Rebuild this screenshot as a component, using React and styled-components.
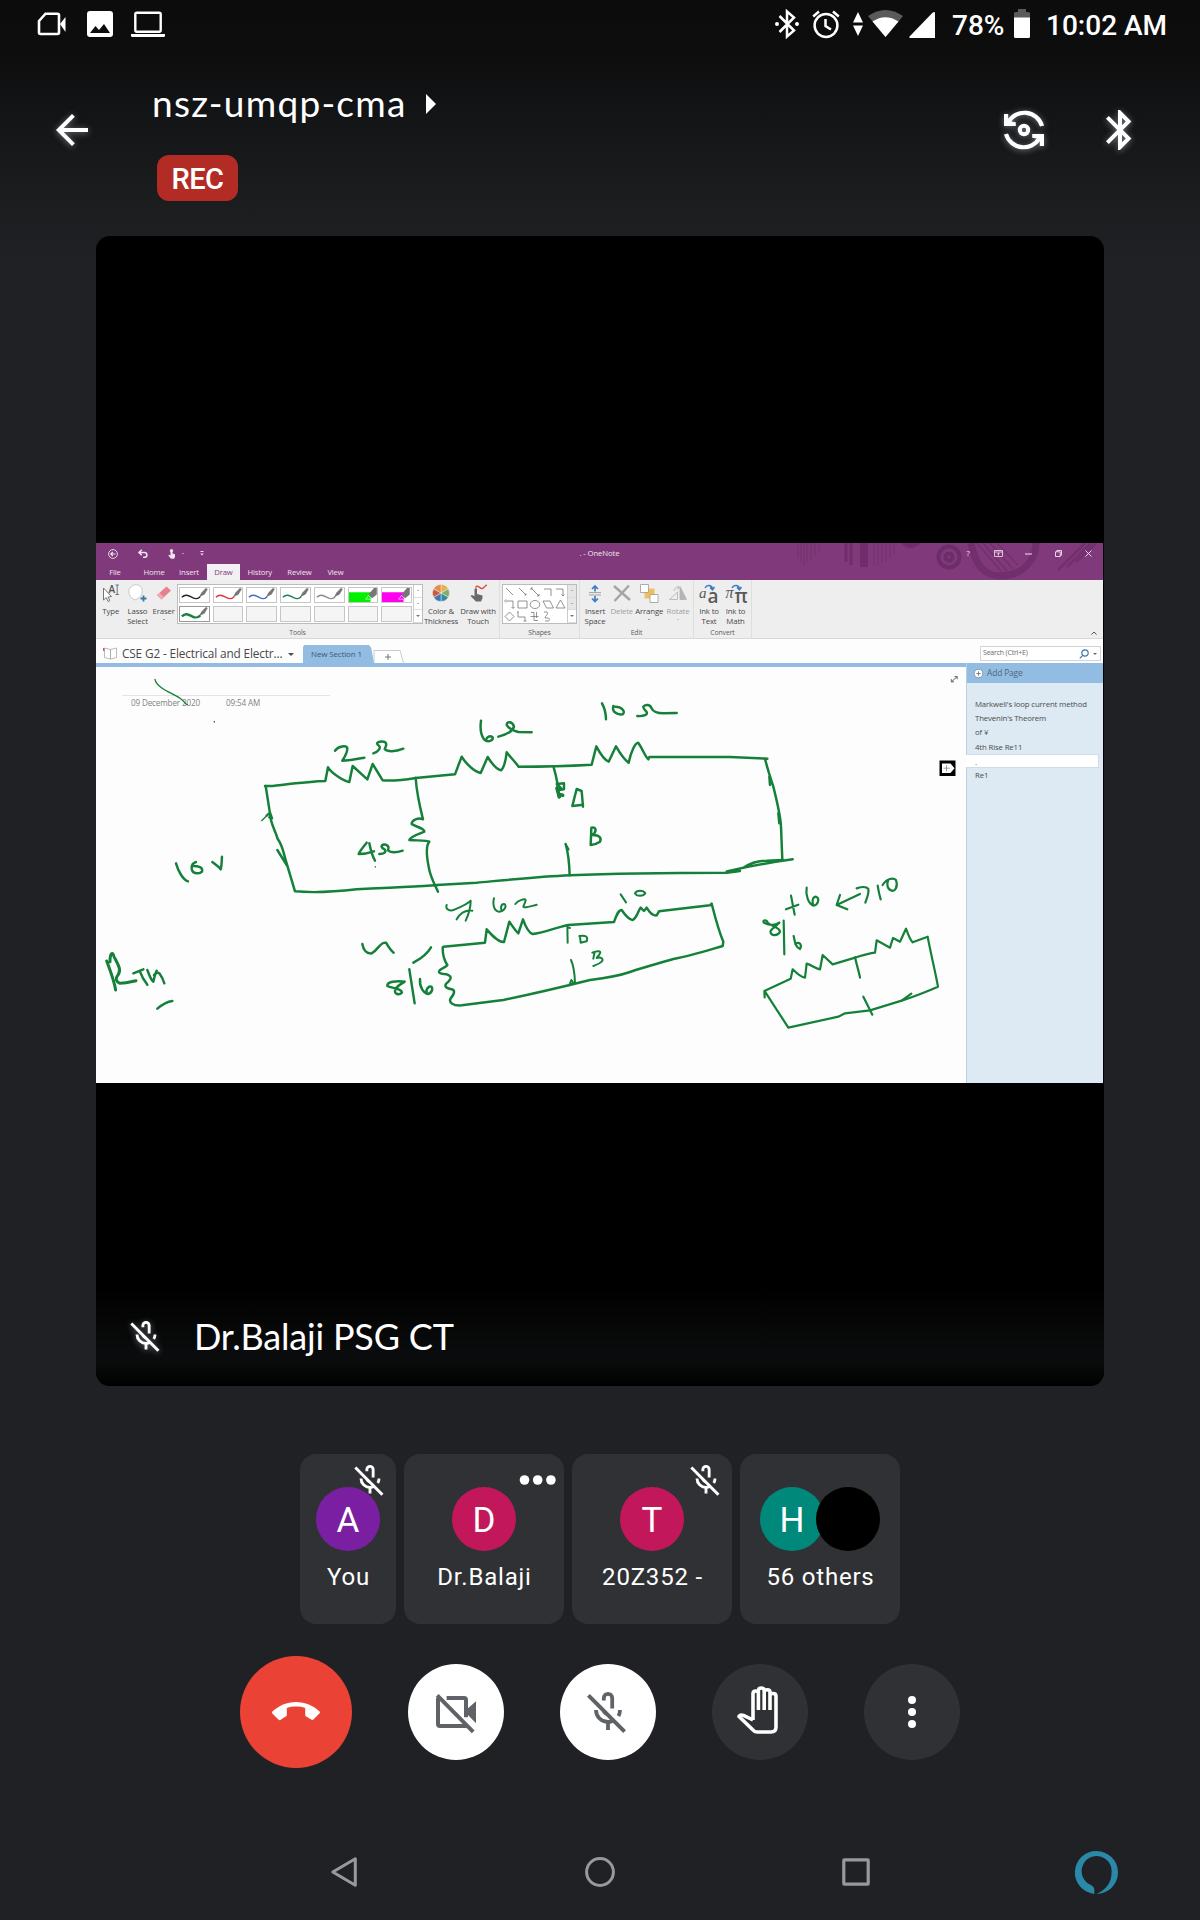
import React from "react";
import styled, { createGlobalStyle } from "styled-components";

const GlobalStyle = createGlobalStyle`
  *, *::before, *::after { box-sizing: border-box; }
  body { margin: 0; background: #202124; }
`;

const ui = `"Roboto", "Liberation Sans", sans-serif`;
const office = `"Open Sans", "Noto Sans", sans-serif`;

const Screen = styled.main`
  width: 1200px;
  height: 1920px;
  display: flex;
  flex-direction: column;
  overflow: hidden;
  color: #fff;
  font-family: ${ui};
  background: linear-gradient(#0c0c0c 0, #0d0d0d 48px, #141517 120px, #1b1c1e 190px, #202124 265px);
`;

const Glyph = styled.svg`
  display: block;
  flex: none;
  width: ${(p) => p.$w}px;
  height: ${(p) => p.$h || p.$w}px;
  margin-left: ${(p) => p.$ml || 0}px;
  margin-top: ${(p) => p.$mt || 0}px;
  overflow: visible;
  ${(p) => p.$glow && "filter: drop-shadow(0 1px 3px rgba(200, 215, 225, 0.5));"}
`;

/* ---------- system status bar ---------- */

const StatusBar = styled.div`
  height: 50px;
  flex: none;
  display: flex;
  justify-content: space-between;
  align-items: flex-start;
  padding: 9px 33px 0 37px;
`;
const StatusGroup = styled.div`
  display: flex;
  align-items: flex-start;
`;
const StatusText = styled.span`
  margin-left: ${(p) => p.$ml}px;
  width: ${(p) => p.$w}px;
  font-size: 28px;
  font-weight: 500;
  line-height: 34px;
  white-space: nowrap;
  letter-spacing: ${(p) => p.$ls || 0}px;
`;

/* ---------- meeting header ---------- */

const Header = styled.header`
  height: 186px;
  flex: none;
  display: flex;
  padding: 0 56px 0 48px;
`;
const BackButton = styled.div`
  padding-top: 56px;
  width: 104px;
`;
const TitleBlock = styled.div`
  flex: 1;
  padding-top: 30px;
`;
const TitleLine = styled.div`
  display: flex;
  align-items: center;
  height: 48px;
`;
const MeetingCode = styled.h1`
  margin: 0;
  width: 274px;
  font: 400 37px/46px "Lato", ${ui};
  height: 48px;
  letter-spacing: 1.25px;
  white-space: nowrap;
`;
const RecBadge = styled.div`
  margin: 27px 0 0 5px;
  width: 81px;
  height: 46px;
  padding-top: 1px;
  border-radius: 12px;
  background: #b32b25;
  display: flex;
  align-items: center;
  justify-content: center;
  font-size: 29px;
  font-weight: 500;
  letter-spacing: -0.5px;
`;
const HeaderActions = styled.div`
  display: flex;
  gap: 48px;
  padding-top: 56px;
`;

/* ---------- presentation stage ---------- */

const Stage = styled.section`
  position: relative;
  width: 1008px;
  height: 1150px;
  flex: none;
  margin: 0 96px;
  padding-top: 307px;
  border-radius: 14px;
  background: #000;
  overflow: hidden;
`;
const SpeakerBar = styled.div`
  position: absolute;
  left: 0;
  right: 0;
  bottom: 0;
  height: 100px;
  padding: 0 32px 32px;
  display: flex;
  align-items: flex-end;
  background: linear-gradient(#000, #0b0c0d 72%, #000);
`;
const SpeakerName = styled.span`
  margin-left: 30px;
  font: 400 36px/36px "Lato", ${ui};
  white-space: nowrap;
  letter-spacing: -0.2px;
`;

/* ---------- shared OneNote window ---------- */

const Window = styled.div`
  width: 1007px;
  height: 540px;
  display: flex;
  flex-direction: column;
  background: #fdfdfd;
  color: #4a4a4a;
  font: 7.8px/10.4px ${office};
  letter-spacing: -0.14px;
`;
const Caption = styled.div`
  position: relative;
  height: 37px;
  background: #80397a;
  color: #f0e4ee;
`;
const Pattern = styled.svg`
  position: absolute;
  right: 0;
  top: 0;
  width: 310px;
  height: 37px;
`;
const CaptionRow = styled.div`
  position: relative;
  height: 21px;
  display: grid;
  grid-template-columns: 1fr auto 1fr;
  align-items: center;
`;
const QuickAccess = styled.div`
  display: flex;
  align-items: center;
  padding-left: 12px;
`;
const WindowButtons = styled.div`
  display: flex;
  justify-content: flex-end;
`;
const WindowButton = styled.span`
  width: 30px;
  height: 20px;
  display: flex;
  align-items: center;
  justify-content: center;
`;
const Tabs = styled.div`
  position: relative;
  display: flex;
  padding-left: 1px;
  height: 16px;
`;
const Tab = styled.span`
  width: ${(p) => p.$w}px;
  margin-left: ${(p) => p.$ml || 0}px;
  text-align: center;
  line-height: 16px;
  font-size: 7.7px;
  background: ${(p) => (p.$active ? "#f3f0f3" : "transparent")};
  color: ${(p) => (p.$active ? "#80397a" : "#f0e4ee")};
`;

const Ribbon = styled.div`
  height: 59px;
  display: flex;
  background: #efeeef;
  border-bottom: 1px solid #d8d8d8;
`;
const Group = styled.div`
  width: ${(p) => p.$w}px;
  display: flex;
  flex-direction: column;
  border-right: 1px solid #dfdedf;
`;
const GroupItems = styled.div`
  height: 48px;
  display: flex;
  padding-left: ${(p) => p.$pl || 0}px;
`;
const GroupLabel = styled.div`
  text-align: center;
  font-size: 6.9px;
  line-height: 11px;
  color: #5c5c5c;
`;
const Tool = styled.div`
  width: ${(p) => p.$w}px;
  display: flex;
  flex-direction: column;
  align-items: center;
  padding-top: 4px;
  text-align: center;
  white-space: pre;
  color: ${(p) => (p.$off ? "#a0a0a0" : "#484848")};
`;
const ToolIcon = styled.div`
  height: 22px;
`;
const Caret = styled.i`
  width: 0;
  height: 0;
  border: ${(p) => p.$s || 1.5}px solid transparent;
  border-top-color: currentColor;
  border-bottom: 0;
  margin: ${(p) => p.$m || "3px 0 0"};
`;
const Gallery = styled.div`
  width: ${(p) => p.$w}px;
  height: 40px;
  margin-top: 4px;
  display: flex;
  background: #fff;
  border: 1px solid #bcbcbc;
`;
const PenGrid = styled.div`
  flex: 1;
  display: grid;
  grid-template-columns: repeat(7, 1fr);
  gap: 3px;
  padding: 2px 1px 1px 1px;
`;
const PenCell = styled.div`
  border: ${(p) => (p.$selected ? "1.5px solid #999" : "1px solid #c6c6c6")};
  background: ${(p) => (p.$empty ? "#f5f5f5" : "#fff")};
  svg { display: block; width: 100%; height: 100%; }
`;
const Scroller = styled.div`
  width: 9px;
  display: flex;
  flex-direction: column;
  border-left: 1px solid #ccc;
  color: #777;
`;
const ScrollStep = styled.span`
  flex: 1;
  display: flex;
  align-items: center;
  justify-content: center;
  border-bottom: 1px solid #ddd;
  background: ${(p) => (p.$dim ? "#e6e6e6" : "#fff")};
`;
const RibbonEnd = styled.div`
  flex: 1;
  display: flex;
  justify-content: flex-end;
  align-items: flex-end;
  padding: 0 6px 3px 0;
`;

const SectionRow = styled.div`
  height: 28px;
  display: flex;
  align-items: flex-end;
  background: #fefdfe;
  border-bottom: 4px solid #92bce2;
`;
const Notebook = styled.div`
  width: 207px;
  height: 24px;
  display: flex;
  align-items: center;
  padding: 4px 0 0 7px;
`;
const NotebookName = styled.span`
  margin-left: 4px;
  width: 163px;
  white-space: nowrap;
  font-size: 11.8px;
  line-height: 16px;
  color: #484848;
`;
const SectionTab = styled.div`
  width: 71px;
  height: 18px;
  padding-left: 8px;
  font-size: 8px;
  line-height: 18px;
  color: #3d5873;
  background: #92bce2;
  clip-path: polygon(0 8%, 2% 0, 93% 0, 96% 15%, 100% 100%, 0 100%);
  white-space: nowrap;
`;
const SearchBox = styled.div`
  margin-left: auto;
  margin-right: 2px;
  margin-bottom: 2px;
  width: 121px;
  height: 15px;
  display: flex;
  align-items: center;
  padding: 0 2px;
  border: 1px solid #d4d4d4;
  background: #fff;
  font-size: 7px;
  letter-spacing: -0.2px;
  color: #6a6a6a;
`;
const SearchText = styled.span`
  flex: 1;
`;

const Workspace = styled.div`
  flex: 1;
  display: flex;
`;
const Paper = styled.div`
  position: relative;
  width: 870px;
  padding: 28px 0 0 26px;
  background: #fdfdfd;
`;
const DateLine = styled.div`
  width: 208px;
  padding: 1px 0 0 9px;
  border-top: 1px solid #e4e4e4;
  display: flex;
  font-size: 8.1px;
  line-height: 11px;
  color: #828282;
  white-space: nowrap;
`;
const DateText = styled.span`
  width: 95px;
`;
const Ink = styled.svg`
  position: absolute;
  left: 0;
  top: 0;
  width: 871px;
  height: 416px;
  fill: none;
  stroke: #15803a;
  stroke-width: 7.4;
  stroke-linecap: round;
  stroke-linejoin: round;
`;
const PageList = styled.aside`
  width: 137px;
  margin-top: -4px;
  background: #dde9f3;
  border-left: 1px solid #bccfdf;
`;
const AddPage = styled.div`
  height: 20px;
  display: flex;
  align-items: center;
  gap: 4px;
  padding-left: 7px;
  margin-bottom: 14px;
  background: #92bce2;
  font-size: 8.4px;
  color: #50677d;
`;
const PageItem = styled.div`
  height: 14.2px;
  margin: 0 4px 0 -1px;
  padding-left: 9px;
  line-height: 14px;
  font-size: 7.8px;
  white-space: nowrap;
  color: #4c4c4c;
  ${(p) => p.$selected && "background: #fff; border: 1px solid #cfdde9; border-left: 0;"}
`;

/* ---------- participants & controls ---------- */

const Participants = styled.section`
  display: flex;
  flex: none;
  justify-content: center;
  gap: 8px;
  margin-top: 68px;
`;
const Tile = styled.div`
  position: relative;
  width: ${(p) => p.$w || 160}px;
  height: 170px;
  padding-top: 33px;
  border-radius: 16px;
  background: #303134;
  display: flex;
  flex-direction: column;
  align-items: center;
`;
const Avatars = styled.div`
  display: flex;
`;
const Avatar = styled.div`
  width: 64px;
  height: 64px;
  border-radius: 50%;
  background: ${(p) => p.$color};
  font-size: 35px;
  line-height: 67px;
  text-align: center;
  & + & { margin-left: -8px; }
`;
const TileLabel = styled.div`
  margin-top: 12px;
  padding-left: 1px;
  font-size: 24px;
  line-height: 28px;
  letter-spacing: 0.8px;
  white-space: nowrap;
`;
const Corner = styled.div`
  position: absolute;
  top: 8px;
  right: 8px;
`;

const Controls = styled.section`
  display: flex;
  flex: none;
  justify-content: center;
  align-items: center;
  gap: 56px;
  height: 112px;
  margin-top: 32px;
`;
const RoundButton = styled.div`
  width: ${(p) => p.$size || 96}px;
  height: ${(p) => p.$size || 96}px;
  border-radius: 50%;
  background: ${(p) => p.$bg || "#303134"};
  color: ${(p) => p.$fg || "#fff"};
  display: flex;
  align-items: center;
  justify-content: center;
`;
const SystemNav = styled.nav`
  display: flex;
  flex: none;
  align-items: center;
  height: 96px;
  margin-top: 56px;
  padding-left: 331px;
`;

/* ---------- drawings ---------- */

const MicOff = ({ size, glow }) => (
  <Glyph viewBox="0 0 24 24" $w={size} $glow={glow} fill="none" stroke="currentColor" strokeWidth="1.9">
    <path d="M9.9 6.2V5a2.1 2.1 0 0 1 4.2 0v5.3" />
    <path d="M9 10.3V11a3 3 0 0 0 3.6 2.9z" fill="currentColor" stroke="none" />
    <path d="M6 11a6 6 0 0 0 6 6c1 0 2-.3 2.9-.8M18 11c0 1.1-.3 2.1-.8 3M12 17v4" />
    <path d="M2.2 3.7 20.3 21.8" strokeWidth="2" />
  </Glyph>
);

const CamOff = () => (
  <Glyph viewBox="0 0 24 24" $w={48} fill="none" stroke="currentColor" strokeWidth="2">
    <path d="M7.3 5H16q1 0 1 1v8.6M3 5v13q0 1 1 1h13.4" />
    <path d="M17 11 22 6.6v11L17.5 13z" fill="currentColor" stroke="none" />
    <path d="M2.6 3.7 20.6 21.9" />
  </Glyph>
);

const btPath =
  "M17.71 7.71L12 2h-1v7.59L6.41 5 5 6.41 10.59 12 5 17.59 6.41 19 11 14.41V22h1l5.71-5.71-4.3-4.29 4.3-4.29zM13 5.83l1.88 1.88L13 9.59V5.83zm1.88 10.46L13 18.17v-3.76l1.88 1.88z";

const swapArc = (
  <>
    <path d="M42 20A18.3 18.3 0 0 0 8.5 16" strokeWidth="4.2" />
    <path d="M4 8h4.2v7l7.6 1.2V20H4z" fill="currentColor" stroke="none" />
  </>
);

const pens = ["#222", "#e0343b", "#3c6fc4", "#1c8050", "#8a8a8a"];
const markers = ["#00f000", "#ff00f0"];

const Pen = ({ color, thick }) => (
  <svg viewBox="0 0 31 15" preserveAspectRatio="none">
    <path d="M2 10C6 6 9 8 13 10S19 12 22 9" fill="none" stroke={color} strokeWidth={thick ? 2.6 : 1.5} />
    <path d="M20.5 10 23 5 28 0 30 1 26.5 7z" fill="#777" />
  </svg>
);
const Marker = ({ color }) => (
  <svg viewBox="0 0 31 15" preserveAspectRatio="none">
    <path d="M0 4.500H25L23 15H0z" fill={color} />
    <path d="M18 12 21 8l4 4z" fill={color} stroke="#fff" strokeWidth=".7" />
    <path d="M21 7 27 0H30V7L25 11z" fill="#777" />
  </svg>
);

const Steps = ({ dim }) => (
  <Scroller>
    <ScrollStep $dim={dim}><Caret $s={1} $m="0" /></ScrollStep>
    <ScrollStep $dim={dim}><Caret $s={1} $m="0" /></ScrollStep>
    <ScrollStep><Caret $s={2} $m="0" /></ScrollStep>
  </Scroller>
);

const wheel = ["#e8b04c", "#7cb06c", "#3a8a9c", "#3e78b8", "#c95b3c", "#e88a4c"];
const slice = (i) => {
  const a = ((i * 60 - 90) * Math.PI) / 180;
  const b = ((i * 60 - 30) * Math.PI) / 180;
  return `M9 9L${9 + 8.5 * Math.cos(a)} ${9 + 8.5 * Math.sin(a)}A8.5 8.5 0 0 1 ${9 + 8.5 * Math.cos(b)} ${9 + 8.5 * Math.sin(b)}z`;
};

function InkDrawing() {
  return (
    <Ink viewBox="96 667 871 416">
      <g transform="translate(90 660) scale(.33333)">
        <path strokeWidth="4" d="M195 58C200 85 250 100 270 115S285 132 292 134M373 184v2M856 620v1M515 482 530 467" />
        <path d="M735 272C745 258 770 255 772 265C772 280 765 290 757 302C780 302 800 296 823 293" />
        <path d="M850 280C866 275 876 262 864 255C856 247 868 243 882 245C893 249 888 260 884 267C892 276 915 276 940 266" />
        <path d="M525 378 548 378C600 372 660 364 706 363L714 322C725 340 760 362 778 366L788 318 832 358 848 312 878 361C900 363 940 360 977 354" />
        <path d="M527 378 540 460C540 490 560 520 562 535C580 560 580 580 590 610L615 694C680 700 740 695 800 688C900 682 980 680 1040 676M530 467 540 458 546 475 538 472M562 570 592 618" />
        <path d="M977 354C980 400 992 450 999 478C985 472 965 480 965 492C975 500 1005 505 1003 515C990 520 960 530 958 540C980 542 1010 540 1018 545C1005 560 1012 600 1016 620C1020 650 1035 675 1044 695" />
        <path d="M830 548C820 560 808 575 806 582C820 582 840 578 852 574M838 550C842 570 848 590 855 602M868 582C886 582 892 572 880 566C870 558 876 552 888 554C898 558 896 566 894 571C904 580 920 578 938 572" />
        <path d="M258 610C265 635 280 660 294 664M318 606C300 612 300 640 322 640C342 640 345 618 310 618M367 606C375 612 388 622 392 628C396 615 395 600 396 590" />
        <path strokeWidth="9" d="M50 903C60 930 72 960 77 990M60 905C60 880 68 872 72 890C85 915 95 930 84 945C75 955 78 965 90 970C110 970 125 965 138 962" />
        <path d="M130 940 160 928M150 935C155 950 165 965 172 974M172 930C178 945 182 960 190 965C193 950 196 940 200 932M192 945C198 938 204 936 208 940C214 948 220 960 223 970M202 1046C215 1035 230 1025 247 1023" />
        <path d="M817 852C820 870 830 882 845 880C865 870 870 845 888 848C895 860 902 872 911 878M970 908C985 900 1010 885 1023 862" />
        <path d="M944 965C920 962 890 965 892 978C905 985 935 985 936 998C925 1008 908 1000 918 985C925 975 935 970 944 965M958 928 974 1030M990 957C988 980 1000 1000 1015 1002C1030 998 1030 975 1018 980C1010 985 1008 990 1010 998" />
      </g>
      <g transform="translate(430 680) scale(.33333)">
        <path d="M-43 294 75 283 95 230C110 255 135 275 152 279L173 231C185 250 200 268 213 271C225 260 228 235 230 217C240 230 255 245 266 260C300 260 380 260 485 254L499 199C510 220 525 240 536 245L558 199C570 220 585 240 596 248C603 215 615 190 624 188C635 200 645 230 655 238L658 231 900 231 1012 236" />
        <path d="M1005 236C1012 265 1020 290 1030 320C1040 360 1052 410 1053 440L1057 540M1020 315 1018 290M1048 430 1045 400" />
        <path d="M20 615 140 608C250 598 330 590 420 586C550 580 700 578 890 578L930 573M890 574C930 565 1000 550 1088 538M940 563C960 550 980 542 1010 542L1058 540" />
        <path d="M371 262C378 285 384 310 387 352M380 312 402 310 402 328 384 330M440 327 427 378 459 374M440 327 455 333 459 380M407 494 415 508M407 492C415 520 418 550 419 586" />
        <path d="M381 325 388 350M384 318 392 326M386 343 398 346" strokeWidth="11" />
        <path d="M484 445 482 495M484 443C500 440 500 455 488 465C510 465 515 475 510 485C500 492 490 494 482 495" />
        <path d="M516 70C524 85 528 100 528 118M550 78C545 95 560 105 578 103C588 95 575 80 556 80M622 108C642 110 654 104 650 96C644 88 638 86 640 80C648 72 661 74 664 84C670 96 680 100 700 100L740 99" />
        <path d="M153 122C150 145 152 165 162 178C175 190 190 180 188 172C180 165 170 170 168 180M205 170C225 165 248 155 252 140C248 125 230 122 230 135C235 145 250 152 265 156L305 157" />
        <path strokeWidth="6" d="M50 675C45 690 60 695 75 688C95 680 115 670 122 662C122 685 115 705 107 722M80 718C90 700 105 690 127 692M192 655C188 670 190 690 205 695C225 695 232 675 222 672C212 672 212 685 215 692M256 672C265 660 285 655 287 660C287 670 275 680 283 682C295 682 305 678 320 674" />
        <path d="M38 803 40 800 165 788 170 748C185 765 205 788 222 786L238 725C248 740 258 755 265 760L279 718C285 735 295 758 308 762C340 758 370 745 415 735L552 726C560 705 565 690 575 690C585 705 595 718 608 720C622 712 625 690 632 683L642 693 650 683C660 700 670 708 680 706L687 694 840 676 845 671C855 710 865 750 880 785L878 798C830 812 780 828 730 837C680 852 640 862 600 876C560 890 520 895 480 900C420 915 340 935 220 960L95 976C70 978 55 968 62 955C75 940 75 930 65 928C45 925 40 915 55 905C65 895 65 888 50 883C30 882 22 878 30 870C40 862 50 860 52 855C42 840 38 820 38 803" />
        <path strokeWidth="6" d="M412 735 413 788M412 742 420 744M450 768 452 788 470 784C475 770 468 765 448 768M487 818C500 812 515 812 510 820C505 830 500 832 500 834C515 830 522 838 515 845C508 852 498 855 490 858M494 816 490 836M423 840C432 860 434 880 435 908M418 916 424 900 432 912 422 912M572 643 588 667M615 640C620 650 640 650 646 640C640 630 620 630 615 640" />
      </g>
      <g transform="translate(740 740) scale(.33333)" strokeWidth="6.600">
        <path d="M138 508 175 494M153 467 164 524M200 443C196 465 205 490 220 497C235 495 240 475 228 470C218 470 215 485 220 494" />
        <path d="M300 465 290 495 322 508M290 495 360 462M350 445C365 440 380 440 385 447C388 460 380 475 376 488M413 437C415 450 418 465 422 478M428 435C440 415 460 412 468 420C475 440 465 455 455 452C440 448 440 430 445 420" />
        <path d="M118 548C100 560 85 555 72 548C65 540 80 538 83 548C95 560 118 560 120 575C112 590 88 588 92 572C100 562 112 555 118 548M131 542 133 643M161 588C165 605 165 620 180 627C187 615 178 602 166 612" />
        <path d="M74 772 73 753 152 716 158 688C170 700 182 712 195 713L200 671C215 675 225 685 240 688L248 645 278 673 348 652C370 645 385 640 405 638L410 601 450 623 459 594 480 605 498 566C505 585 510 600 518 607L563 590C572 640 585 690 594 740C560 755 520 770 485 782L390 811 315 820 295 830 145 863 75 755" />
        <path d="M345 652C350 675 357 695 360 713M370 770 397 824M485 782 514 761" />
      </g>
      <g strokeWidth="1" stroke="#666">
        <path d="M951.500 681.700 957 676.800M954.800 676.600h2.400v2.200M951.300 679.500v2.300h2.400" />
      </g>
      <g stroke="none">
        <path d="M939.5 760.5h16v15.500h-16z" fill="#000" />
        <path d="M942 763.500h8.500l4 4.700-4 4.800H942z" fill="#fff" />
        <path d="M946.500 765.500v5.500M943.800 768.200h5.500" stroke="#888" strokeWidth=".8" />
      </g>
    </Ink>
  );
}

const CaptionPattern = () => (
  <Pattern viewBox="0 0 310 37" fill="none" stroke="#6c2d69">
    <path d="M5 0V15M8 0V20M11 0V22M14 0V19M18 0V17M22 0V12M26 0V8" opacity=".7" />
    <path d="M53 0V19M58 0V22" strokeWidth="3" opacity=".85" />
    <path d="M71 0V24" strokeWidth="8" opacity=".85" />
    <path d="M81 0V23M85 0V22M89 0V20M93 0V18M97 0V16M101 0V12" opacity=".8" />
    <path d="M108 0q9 10 20 0z" fill="#692c66" stroke="none" opacity=".8" />
    <circle cx="156" cy="14" r="10.500" strokeWidth="4" />
    <circle cx="156" cy="14" r="3.500" strokeWidth="4" />
    <path d="M178 0C184 32 200 36 220 31 236 26 243 12 243 0" strokeWidth="7" opacity=".75" />
    <path d="M184 0 208 28M190 0 214 28M197 0 220 26M204 0 225 22" strokeWidth="1.200" opacity=".8" />
    <path d="M265 27 292 0M274 24 298 0M283 19 303 0" strokeWidth="2.600" opacity=".7" />
  </Pattern>
);

function OneNote() {
  return (
    <Window>
      <Caption>
        <CaptionPattern />
        <CaptionRow>
          <QuickAccess>
            <Glyph viewBox="0 0 10 10" $w={10} fill="none" stroke="currentColor" strokeWidth=".9">
              <circle cx="5" cy="5" r="4.400" />
              <path d="M7.500 5H2.800M4.800 3 2.800 5l2 2" strokeWidth="1.200" />
            </Glyph>
            <Glyph viewBox="0 0 10 9" $w={10} $h={9} $ml={20} fill="none" stroke="currentColor" strokeWidth="1.500">
              <path d="M1 3.500H6.500a2.300 2.300 0 0 1 0 4.800H5M3.800.8 1 3.500 3.800 6.200" />
            </Glyph>
            <Glyph viewBox="0 0 8 10" $w={8} $h={10} $ml={20} fill="currentColor">
              <path d="M2.500 1.500a1 1 0 0 1 2 0V4.500L7 5.300V8L6 9.800H3L.3 6.500l.8-.7 1.400.8z" />
              <circle cx="3.500" cy="1.800" r="1.800" opacity=".8" />
            </Glyph>
            <Caret $m="0 0 0 6px" />
            <Glyph viewBox="0 0 4 5" $w={4} $h={5} $ml={16} fill="currentColor">
              <path d="M.5 0h3v1h-3zM.2 2.500h3.600L2 4.500z" />
            </Glyph>
          </QuickAccess>
          <span>. - OneNote</span>
          <WindowButtons>
            <WindowButton>?</WindowButton>
            <WindowButton>
              <Glyph viewBox="0 0 9 7" $w={9} $h={7} fill="none" stroke="currentColor" strokeWidth=".8">
                <path d="M.5.5h8v6h-8zM.5 2h8M4.500 5.500V3M3.300 4.200 4.500 3l1.200 1.200" />
              </Glyph>
            </WindowButton>
            <WindowButton>
              <Glyph viewBox="0 0 7 2" $w={7} $h={2} fill="currentColor"><path d="M0 .5h7v1H0z" /></Glyph>
            </WindowButton>
            <WindowButton>
              <Glyph viewBox="0 0 7 7" $w={7} fill="none" stroke="currentColor" strokeWidth=".9">
                <path d="M.5 1.800h4.700v4.700H.5zM1.800 1.800V.5h4.700v4.700H5.200" />
              </Glyph>
            </WindowButton>
            <WindowButton>
              <Glyph viewBox="0 0 7 7" $w={7} stroke="currentColor" strokeWidth=".9"><path d="M.5.500 6.500 6.500M6.500.500.500 6.500" /></Glyph>
            </WindowButton>
          </WindowButtons>
        </CaptionRow>
        <Tabs>
          <Tab $w={36}>File</Tab>
          <Tab $w={42}>Home</Tab>
          <Tab $w={28}>Insert</Tab>
          <Tab $w={33} $ml={4} $active>Draw</Tab>
          <Tab $w={39.5}>History</Tab>
          <Tab $w={40}>Review</Tab>
          <Tab $w={32}>View</Tab>
        </Tabs>
      </Caption>

      <Ribbon>
        <Group $w={404}>
          <GroupItems $pl={1}>
            <Tool $w={27.5}>
              <ToolIcon>
                <Glyph viewBox="0 0 18 18" $w={18} fill="none" stroke="#666" strokeWidth=".9">
                  <path d="M1.500 4V16L4.300 13.500 6 17.500 7.800 16.700 6.200 13 9.500 12.500z" fill="#fff" />
                  <text x="6.500" y="9" fontSize="10" fontWeight="600" fill="#555" stroke="none">A</text>
                  <path d="M13.500 1h3.500M15.200 1v9.500M13.500 10.500h3.500" />
                </Glyph>
              </ToolIcon>
              Type
            </Tool>
            <Tool $w={26}>
              <ToolIcon>
                <Glyph viewBox="0 0 19 18" $w={19} $h={18}>
                  <path d="M2 4C5-1 13 0 14 5 15 9 13 12 11 14L7 16C2 14-1 8 2 4z" fill="#fff" stroke="#bbb" strokeWidth=".8" />
                  <path d="M15.500 11.500v6M12.500 14.500h6" stroke="#3a78a8" strokeWidth="1.800" />
                </Glyph>
              </ToolIcon>
              {"Lasso\nSelect"}
            </Tool>
            <Tool $w={26.5}>
              <ToolIcon>
                <Glyph viewBox="0 0 16 18" $w={16} $h={18}>
                  <path d="M1 11 10.500 2.500 15 6.500 5.500 15.500z" fill="#e8808f" />
                  <path d="M1 11 3.500 9 8 13.200 5.500 15.500z" fill="#f2a9b2" />
                </Glyph>
              </ToolIcon>
              Eraser
              <Caret />
            </Tool>
            <Gallery $w={246}>
              <PenGrid>
                {pens.map((c) => <PenCell key={c}><Pen color={c} /></PenCell>)}
                {markers.map((c) => <PenCell key={c}><Marker color={c} /></PenCell>)}
                <PenCell $selected><Pen color="#1c8040" thick /></PenCell>
                {[1, 2, 3, 4, 5, 6].map((n) => <PenCell key={n} $empty />)}
              </PenGrid>
              <Steps />
            </Gallery>
            <Tool $w={36}>
              <ToolIcon>
                <Glyph viewBox="0 0 18 18" $w={18} stroke="#efeeef" strokeWidth=".5">
                  {wheel.map((c, i) => <path key={c} d={slice(i)} fill={c} />)}
                </Glyph>
              </ToolIcon>
              {"Color &\nThickness"}
            </Tool>
            <Tool $w={38}>
              <ToolIcon>
                <Glyph viewBox="0 0 18 18" $w={18}>
                  <path d="M5.500 5.500C5.500 3.700 8 3.700 8 5.500V10l5.500 1.500V14L12 17.500H7L1.500 12l1.500-1 2.500 1.200z" fill="#6a6a6a" />
                  <path d="M6.500 3.500C9 0 11 5.500 13.500 4.500S15.500 1 18 1.200" fill="none" stroke="#e0503c" strokeWidth="1.500" />
                </Glyph>
              </ToolIcon>
              {"Draw with\nTouch"}
            </Tool>
          </GroupItems>
          <GroupLabel>Tools</GroupLabel>
        </Group>

        <Group $w={80}>
          <GroupItems $pl={2}>
            <Gallery $w={75}>
              <Glyph viewBox="0 0 64 38" $w={64} $h={38} fill="none" stroke="#777" strokeWidth=".8">
                <path d="M3 3 10 10M16 3 23 10M21.500 10H23V8.500M28 3 36 11M34 11h2V9M28 5V3h2M41 4h7v7M53 4h7v7M58.500 9.500 60 11l1.500-1.500" />
                <path d="M3 16h7v7M3 14.500 1.500 16 3 17.500M8.500 22 10 23.500 11.500 22M15 16h9v7h-9zM40 16h7l3.500 7h-7zM53 23l4.500-8 4.500 8z" />
                <ellipse cx="32" cy="19.500" rx="4.800" ry="4" />
                <path d="M2 31.500 6.500 27 11 31.500 6.500 36zM15 27v5h7v4M14 27h2M20.500 36h3M28 27.500h3v8h4M27.500 31.500h8M33.500 27v6M41 27h3c2 2-2 4-2 6h3c2 0 2 3 0 3h-3" />
              </Glyph>
              <Steps dim />
            </Gallery>
          </GroupItems>
          <GroupLabel>Shapes</GroupLabel>
        </Group>

        <Group $w={114}>
          <GroupItems $pl={1}>
            <Tool $w={28}>
              <ToolIcon>
                <Glyph viewBox="0 0 14 20" $w={14} $h={20} fill="none" stroke="#3d7cc0" strokeWidth="1.700">
                  <path d="M7 7.500V2M4 5l3-3 3 3M7 12v5.500M4 14.500l3 3 3-3" />
                  <path d="M1 8.600h12M1 11h12" stroke="#999" strokeWidth=".9" />
                </Glyph>
              </ToolIcon>
              {"Insert\nSpace"}
            </Tool>
            <Tool $w={25.5} $off>
              <ToolIcon>
                <Glyph viewBox="0 0 18 18" $w={18} stroke="#a4a4a4" strokeWidth="2.400"><path d="M1 2 17 16M16 1.500 1.500 17" /></Glyph>
              </ToolIcon>
              Delete
            </Tool>
            <Tool $w={29.5}>
              <ToolIcon>
                <Glyph viewBox="0 0 19 19" $w={19} stroke="#999" strokeWidth=".8">
                  <path d="M4.500 4.500h10v10h-10z" fill="#f0c060" stroke="none" />
                  <path d="M.5.5h8v8h-8zM10 10.500h8v8h-8z" fill="#fff" />
                </Glyph>
              </ToolIcon>
              Arrange
              <Caret />
            </Tool>
            <Tool $w={28} $off>
              <ToolIcon>
                <Glyph viewBox="0 0 18 18" $w={18} fill="none" stroke="#b4b4b4" strokeWidth=".9">
                  <path d="M.5 15.500H8.500V8zM5 7C5 4 7 3.500 10 3.500M8.300 1.500l2 2-2 2" />
                  <path d="M11 2.500V15.500H17.500z" fill="#b4b4b4" />
                </Glyph>
              </ToolIcon>
              Rotate
              <Caret />
            </Tool>
          </GroupItems>
          <GroupLabel>Edit</GroupLabel>
        </Group>

        <Group $w={58}>
          <GroupItems $pl={2}>
            <Tool $w={26}>
              <ToolIcon>
                <Glyph viewBox="0 0 20 20" $w={20} fill="#5a5a5a">
                  <text x="0" y="13.500" fontSize="15" fontStyle="italic" fontFamily="Liberation Serif">a</text>
                  <text x="8.500" y="19" fontSize="19" fontWeight="600">a</text>
                  <path d="M6 4C8 0 13 1 13.500 5M11 3.500 13.500 5.800 15.500 3" fill="none" stroke="#3d7cc0" strokeWidth="1.500" />
                </Glyph>
              </ToolIcon>
              {"Ink to\nText"}
            </Tool>
            <Tool $w={27}>
              <ToolIcon>
                <Glyph viewBox="0 0 20 20" $w={20} fill="#5a5a5a">
                  <text x="-.5" y="13.500" fontSize="16" fontStyle="italic" fontFamily="Liberation Serif">π</text>
                  <text x="8.500" y="19" fontSize="19" fontWeight="600">π</text>
                  <path d="M6 4C8 0 13 1 13.500 5M11 3.500 13.500 5.800 15.500 3" fill="none" stroke="#3d7cc0" strokeWidth="1.500" />
                </Glyph>
              </ToolIcon>
              {"Ink to\nMath"}
            </Tool>
          </GroupItems>
          <GroupLabel>Convert</GroupLabel>
        </Group>
        <RibbonEnd>
          <Glyph viewBox="0 0 6 4" $w={6} $h={4} fill="none" stroke="#555"><path d="M.5 3.500 3 1l2.500 2.500" /></Glyph>
        </RibbonEnd>
      </Ribbon>

      <SectionRow>
        <Notebook>
          <Glyph viewBox="0 0 15 13" $w={15} $h={13} fill="#fff" stroke="#aaa" strokeWidth=".8">
            <path d="M1.500 1 7.500 2.500V12L1.500 10.500zM7.500 2.500 13.500 1V10.500L7.500 12z" />
            <path d="M.7 1v3" stroke="#d05050" strokeWidth="1.300" />
          </Glyph>
          <NotebookName>CSE G2 - Electrical and Electr...</NotebookName>
          <Caret $s={3} $m="3px 0 0 3px" />
        </Notebook>
        <SectionTab>New Section 1</SectionTab>
        <Glyph viewBox="0 0 30 13" $w={30} $h={13} fill="#fff" stroke="#ccc">
          <path d="M0 13V.5H26L29.500 13" />
          <path d="M14 4v6M11 7h6" stroke="#777" />
        </Glyph>
        <SearchBox>
          <SearchText>Search (Ctrl+E)</SearchText>
          <Glyph viewBox="0 0 10 10" $w={10} fill="none" stroke="#3d78b0" strokeWidth="1.200">
            <circle cx="6" cy="4" r="3.200" /><path d="M3.700 6.400.8 9.300" />
          </Glyph>
          <Caret $s={2} $m="0 1px 0 4px" />
        </SearchBox>
      </SectionRow>

      <Workspace>
        <Paper>
          <DateLine>
            <DateText>09 December 2020</DateText>
            <span>09:54 AM</span>
          </DateLine>
          <InkDrawing />
        </Paper>
        <PageList>
          <AddPage>
            <Glyph viewBox="0 0 9 9" $w={9}>
              <circle cx="4.500" cy="4.500" r="4.100" fill="#fff" stroke="#6a7f92" strokeWidth=".6" />
              <path d="M4.500 2.300v4.400M2.300 4.500h4.400" stroke="#666" strokeWidth=".8" />
            </Glyph>
            Add Page
          </AddPage>
          <PageItem>Markwell's loop current method</PageItem>
          <PageItem>Thevenin's Theorem</PageItem>
          <PageItem>of ¥</PageItem>
          <PageItem>4th Rise Re11</PageItem>
          <PageItem $selected>.</PageItem>
          <PageItem>Re1</PageItem>
        </PageList>
      </Workspace>
    </Window>
  );
}

export default function App() {
  return (
    <Screen>
      <GlobalStyle />
      <StatusBar>
        <StatusGroup>
          <Glyph viewBox="0 0 29 24" $w={29} $h={24} $mt={3} fill="none" stroke="#fff" strokeWidth="2.600">
            <path d="M2 9 8.500 1.700H20.500Q22 1.700 22 3.200V20.500Q22 22 20.500 22H3.500Q2 22 2 20.500z" />
            <path d="M23 12 28.500 5V20z" fill="#fff" stroke="none" />
          </Glyph>
          <Glyph viewBox="0 0 26 26" $w={26} $ml={21} $mt={2}>
            <rect width="26" height="26" rx="3" fill="#fff" />
            <path d="M3 22 8.500 15 12 19 17 13 23 22z" fill="#0d0d0d" />
          </Glyph>
          <Glyph viewBox="0 0 34 26" $w={34} $h={26} $ml={18} $mt={2} fill="#fff">
            <path d="M0 23h34v1.500q0 1.500-1.500 1.500h-31Q0 26 0 24.500z" />
            <rect x="4.300" y="1.800" width="25.400" height="19" rx="1.500" fill="none" stroke="#fff" strokeWidth="2.400" />
          </Glyph>
        </StatusGroup>
        <StatusGroup>
          <Glyph viewBox="0 0 24 28" $w={24} $h={28} $mt={1} fill="none" stroke="#fff" strokeWidth="2.500">
            <path d="M4.500 6 19 20.500 12 26.500V1.500L19 7.500 4.500 22" />
            <circle cx="2" cy="14" r="2" fill="#fff" stroke="none" />
            <circle cx="22" cy="14" r="2" fill="#fff" stroke="none" />
          </Glyph>
          <Glyph viewBox="0 0 28 28" $w={28} $h={28} $ml={13} $mt={1} fill="none" stroke="#fff" strokeWidth="2.500">
            <circle cx="14" cy="15.500" r="11.400" />
            <path d="M1.200 6.500 7 1.500M26.800 6.500 21 1.500M13.500 9v7l5.500 3.500" />
          </Glyph>
          <Glyph viewBox="0 0 10 24" $w={10} $h={24} $ml={13} $mt={3} fill="#fff">
            <path d="M5 0 10 10.500H0zM0 13.500h10L5 24z" />
          </Glyph>
          <Glyph viewBox="0 0 35 27" $w={35} $h={27} $ml={5} $mt={1}>
            <path d="M0 6Q17.500-6 35 6L17.500 27z" fill="#5a5a5a" />
            <path d="M4.500 11.500Q17.500 3 30.500 11.500L17.500 27z" fill="#fff" />
          </Glyph>
          <Glyph viewBox="0 0 26 26" $w={26} $ml={6} $mt={3} fill="#fff"><path d="M26 1.500V26H1.500Q-.7 26 .8 24.300L23.500.8Q26-1 26 1.500z" /></Glyph>
          <StatusText $ml={17} $w={54}>78%</StatusText>
          <Glyph viewBox="0 0 16 29" $w={16} $h={29} $ml={8}>
            <path d="M4 0h8v3h2.500Q16 3 16 4.500V9H0V4.500Q0 3 1.500 3H4z" fill="#5a5a5a" />
            <path d="M0 8.500h16v19q0 1.500-1.500 1.500h-13Q0 29 0 27.500z" fill="#fff" />
          </Glyph>
          <StatusText $ml={16} $w={121}>10:02 AM</StatusText>
        </StatusGroup>
      </StatusBar>

      <Header>
        <BackButton>
          <Glyph viewBox="0 0 24 24" $w={48} $glow fill="#fff">
            <path d="M20 11H7.830l5.590-5.590L12 4l-8 8 8 8 1.410-1.410L7.830 13H20v-2z" />
          </Glyph>
        </BackButton>
        <TitleBlock>
          <TitleLine>
            <MeetingCode>nsz-umqp-cma</MeetingCode>
            <Glyph viewBox="0 0 10 20" $w={10} $h={20} fill="#fff"><path d="M0 0 10 10 0 20z" /></Glyph>
          </TitleLine>
          <RecBadge>REC</RecBadge>
        </TitleBlock>
        <HeaderActions>
          <Glyph viewBox="0 0 48 48" $w={48} $glow fill="none" stroke="#fff">
            {swapArc}
            <g transform="rotate(180 24 24)">{swapArc}</g>
            <circle cx="24" cy="24" r="4.200" strokeWidth="4" />
          </Glyph>
          <Glyph viewBox="0 0 24 24" $w={48} $glow fill="#fff"><path d={btPath} /></Glyph>
        </HeaderActions>
      </Header>

      <Stage>
        <OneNote />
        <SpeakerBar>
          <MicOff size={36} glow />
          <SpeakerName>Dr.Balaji PSG CT</SpeakerName>
        </SpeakerBar>
      </Stage>

      <Participants>
        <Tile $w={96}>
          <Avatars><Avatar $color="#7b1fa2">A</Avatar></Avatars>
          <TileLabel>You</TileLabel>
          <Corner><MicOff size={36} /></Corner>
        </Tile>
        <Tile>
          <Avatars><Avatar $color="#c2185b">D</Avatar></Avatars>
          <TileLabel>Dr.Balaji</TileLabel>
          <Corner>
            <Glyph viewBox="0 0 36 36" $w={36} fill="#fff">
              <circle cx="4.500" cy="18" r="4.800" /><circle cx="17.700" cy="18" r="4.800" /><circle cx="30.900" cy="18" r="4.800" />
            </Glyph>
          </Corner>
        </Tile>
        <Tile>
          <Avatars><Avatar $color="#c2185b">T</Avatar></Avatars>
          <TileLabel>20Z352 -</TileLabel>
          <Corner><MicOff size={36} /></Corner>
        </Tile>
        <Tile>
          <Avatars><Avatar $color="#00897b">H</Avatar><Avatar $color="#000" /></Avatars>
          <TileLabel>56 others</TileLabel>
        </Tile>
      </Participants>

      <Controls>
        <RoundButton $size={112} $bg="#ea4335">
          <Glyph viewBox="0 0 24 24" $w={48} fill="#fff">
            <path d="M12 7C7.400 7 3.300 8.900.2 11.800c-.3.3-.2.8.1 1.100l3 3c.3.3.8.3 1.100 0 .8-.7 1.600-1.200 2.500-1.600.3-.2.5-.4.5-.8V10C8.900 9.500 10.400 9.300 12 9.300s3.100.2 4.600.7v3.400c0 .4.2.7.5.8.9.4 1.700 1 2.500 1.600.3.3.8.3 1.100 0l3-3c.3-.3.4-.8.1-1.100C20.700 8.900 16.600 7 12 7z" />
          </Glyph>
        </RoundButton>
        <RoundButton $bg="#fff" $fg="#5f6368"><CamOff /></RoundButton>
        <RoundButton $bg="#fff" $fg="#5f6368"><MicOff size={48} /></RoundButton>
        <RoundButton>
          <Glyph viewBox="0 2 48 48" $w={48} fill="none" stroke="#fff" strokeWidth="3.600" strokeLinejoin="round">
            <path d="M17 34V7.500Q17 5 19.700 5T22.400 7.500V24M22.400 7V4.500Q22.400 2 25.300 2T28.200 4.500V24M28.200 5.500q0-1.700 2.900-1.700T34 6V24M34 9.500q0-2 3-2t3 2.500V41q0 5-5 5H21q-2.500 0-4-2L3 30.500q1.500-2.500 5-.8L17 34" />
          </Glyph>
        </RoundButton>
        <RoundButton>
          <Glyph viewBox="0 0 8 32" $w={8} $h={32} fill="#fff">
            <circle cx="4" cy="4" r="4" /><circle cx="4" cy="16" r="4" /><circle cx="4" cy="28" r="4" />
          </Glyph>
        </RoundButton>
      </Controls>

      <SystemNav>
        <Glyph viewBox="0 0 26 30" $w={26} $h={30} fill="none" stroke="#98999b" strokeWidth="3" strokeLinejoin="round">
          <path d="M24.300 1.800V28.200L1.800 15z" />
        </Glyph>
        <Glyph viewBox="0 0 30 30" $w={30} $ml={228} fill="none" stroke="#98999b" strokeWidth="3">
          <circle cx="15" cy="15" r="13.400" />
        </Glyph>
        <Glyph viewBox="0 0 28 28" $w={28} $ml={227} fill="none" stroke="#98999b" strokeWidth="3.200">
          <rect x="1.800" y="1.800" width="24.400" height="24.400" rx=".5" />
        </Glyph>
        <Glyph viewBox="0 0 43 43" $w={43} $ml={205} fill="#2a88a8">
          <path d="M21.500 0A21.500 21.500 0 1 1 21.500 43C31 39 36.500 31.500 36.500 22A15 15 0 1 0 15 33.500Q19 35.500 19.300 38V42.900A21.500 21.500 0 0 1 21.500 0z" />
        </Glyph>
      </SystemNav>
    </Screen>
  );
}
